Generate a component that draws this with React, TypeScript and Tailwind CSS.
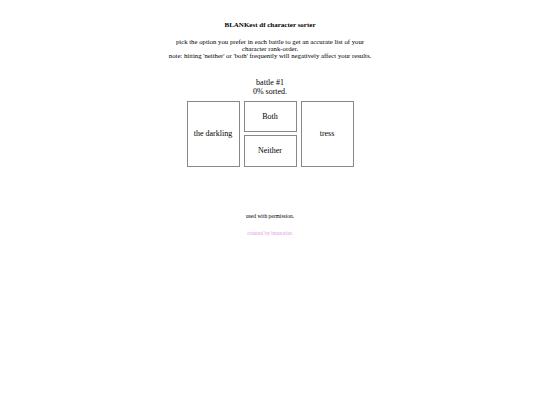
import React from "react";

export default function App() {
  return (
    <div className="w-[540px] h-[405px] bg-white text-black font-['Liberation_Serif',serif] flex flex-col items-center pt-[21px]">
      <h1 className="text-[7px] font-bold leading-[8px]">BLANKest df character sorter</h1>

      <div className="mt-[8.5px] w-[205px] text-center text-[6.75px] leading-[7px]">
        <p>pick the option you prefer in each battle to get an accurate list of your character rank-order.</p>
        <p className="whitespace-nowrap -mx-[20px]">note: hitting 'neither' or 'both' frequently will negatively affect your results.</p>
      </div>

      <div className="mt-[19px] text-center text-[8px] leading-[9px]">
        <p>battle #1</p>
        <p>0% sorted.</p>
      </div>

      <div className="mt-[5.5px] flex gap-[4px] text-[8px]">
        <button className="w-[53px] h-[66px] border border-[#888] flex items-center justify-center">the darkling</button>
        <div className="w-[53px] flex flex-col gap-[3px]">
          <button className="h-[31px] border border-[#888] flex items-center justify-center">Both</button>
          <button className="h-[32px] border border-[#888] flex items-center justify-center">Neither</button>
        </div>
        <button className="w-[53px] h-[66px] border border-[#888] flex items-center justify-center">tress</button>
      </div>

      <p className="mt-[46px] text-[5.5px] leading-[6px]">used with permission.</p>
      <p className="mt-[11px] text-[5.5px] leading-[6px] text-[#e29be2]">created by bnasorier.</p>
    </div>
  );
}
